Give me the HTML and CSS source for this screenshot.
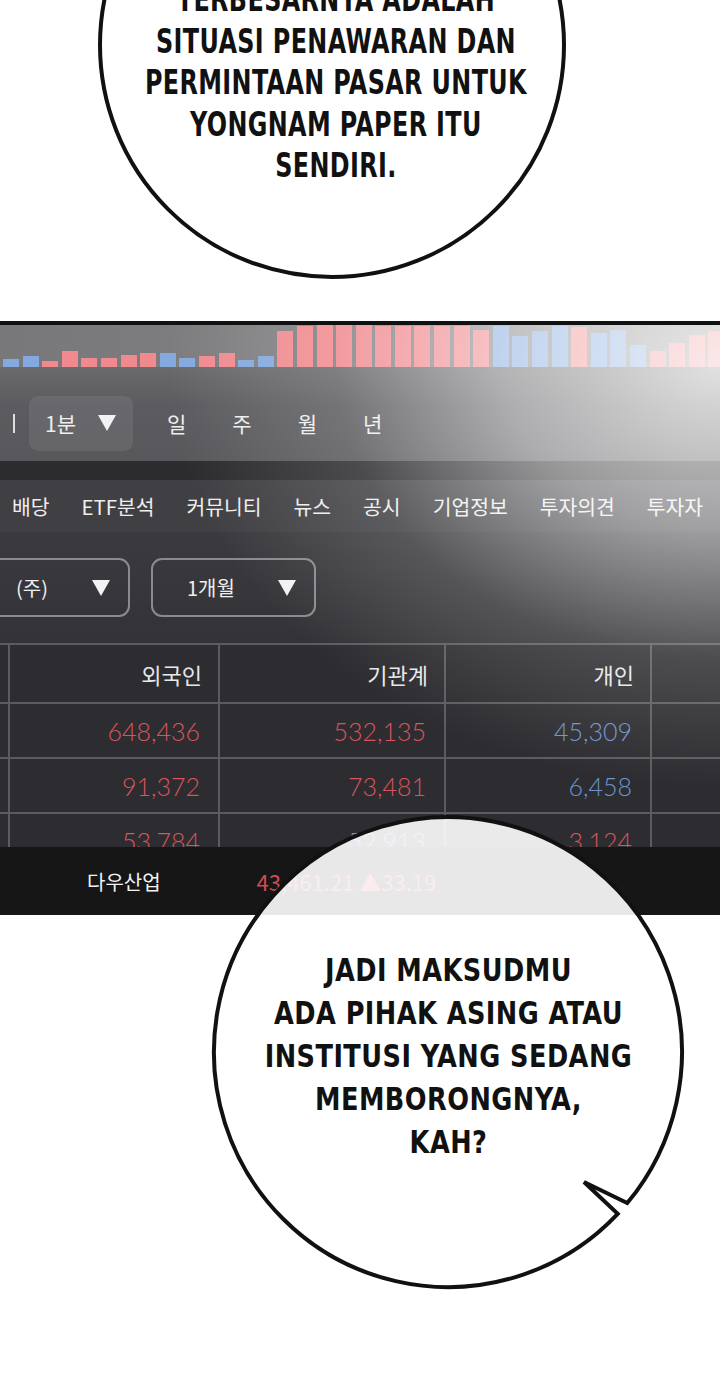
FILE: index.html
```html
<!DOCTYPE html>
<html lang="id">

<head>
    <meta charset="UTF-8">
    <link rel="stylesheet" href="styles.css">
    <title>Yongnam Paper</title>
</head>

<body>
    <div class="page">

        <div class="intro">
            <div class="bubble bubble-top">
                <p class="speech">
                    TERBESARNYA ADALAH<br>
                    SITUASI PENAWARAN DAN<br>
                    PERMINTAAN PASAR UNTUK<br>
                    YONGNAM PAPER ITU<br>
                    SENDIRI.
                </p>
            </div>
        </div>

        <section class="panel">
            <div class="volume-bars">
                <span class="bar down" style="height: 8px"></span>
                <span class="bar down" style="height: 11px"></span>
                <span class="bar up" style="height: 6px"></span>
                <span class="bar up" style="height: 16px"></span>
                <span class="bar up" style="height: 9px"></span>
                <span class="bar up" style="height: 9px"></span>
                <span class="bar up" style="height: 12px"></span>
                <span class="bar up" style="height: 14px"></span>
                <span class="bar down" style="height: 14px"></span>
                <span class="bar down" style="height: 9px"></span>
                <span class="bar up" style="height: 11px"></span>
                <span class="bar up" style="height: 14px"></span>
                <span class="bar down" style="height: 7px"></span>
                <span class="bar down" style="height: 11px"></span>
                <span class="bar up" style="height: 36px"></span>
                <span class="bar up" style="height: 41px"></span>
                <span class="bar up" style="height: 42px"></span>
                <span class="bar up" style="height: 42px"></span>
                <span class="bar up" style="height: 42px"></span>
                <span class="bar up" style="height: 41px"></span>
                <span class="bar up" style="height: 41px"></span>
                <span class="bar up" style="height: 41px"></span>
                <span class="bar up" style="height: 41px"></span>
                <span class="bar up" style="height: 41px"></span>
                <span class="bar up" style="height: 37px"></span>
                <span class="bar down" style="height: 41px"></span>
                <span class="bar down" style="height: 31px"></span>
                <span class="bar down" style="height: 36px"></span>
                <span class="bar down" style="height: 41px"></span>
                <span class="bar up" style="height: 40px"></span>
                <span class="bar down" style="height: 34px"></span>
                <span class="bar down" style="height: 37px"></span>
                <span class="bar down" style="height: 22px"></span>
                <span class="bar up" style="height: 16px"></span>
                <span class="bar up" style="height: 24px"></span>
                <span class="bar up" style="height: 32px"></span>
                <span class="bar up" style="height: 36px"></span>
            </div>

            <div class="period-row">
                <span class="divider"></span>
                <span class="period-select">1분
                    <svg class="caret" viewBox="0 0 18 16"><polygon points="0,0 18,0 9,16" /></svg>
                </span>
                <span class="period">일</span>
                <span class="period">주</span>
                <span class="period">월</span>
                <span class="period">년</span>
            </div>

            <div class="band"></div>

            <nav class="tabs">
                <span>배당</span>
                <span>ETF분석</span>
                <span>커뮤니티</span>
                <span>뉴스</span>
                <span>공시</span>
                <span>기업정보</span>
                <span>투자의견</span>
                <span>투자자</span>
            </nav>

            <div class="filters">
                <div class="select select-unit">(주)
                    <svg class="caret" viewBox="0 0 18 16"><polygon points="0,0 18,0 9,16" /></svg>
                </div>
                <div class="select select-range">1개월
                    <svg class="caret" viewBox="0 0 18 16"><polygon points="0,0 18,0 9,16" /></svg>
                </div>
            </div>

            <div class="table-wrap">
                <table class="investors">
                    <colgroup>
                        <col style="width: 9px">
                        <col style="width: 210px">
                        <col style="width: 226px">
                        <col style="width: 206px">
                        <col style="width: 69px">
                    </colgroup>
                    <tr class="head">
                        <td></td>
                        <td>외국인</td>
                        <td>기관계</td>
                        <td>개인</td>
                        <td></td>
                    </tr>
                    <tr>
                        <td></td>
                        <td class="up">648,436</td>
                        <td class="up">532,135</td>
                        <td class="down">45,309</td>
                        <td></td>
                    </tr>
                    <tr>
                        <td></td>
                        <td class="up">91,372</td>
                        <td class="up">73,481</td>
                        <td class="down">6,458</td>
                        <td></td>
                    </tr>
                    <tr>
                        <td></td>
                        <td class="up">53,784</td>
                        <td class="down">52,913</td>
                        <td class="up">3,124</td>
                        <td></td>
                    </tr>
                </table>
            </div>

            <div class="ticker">
                <span class="ticker-name">다우산업</span>
                <span class="ticker-value">43,461.21 ▲33.19</span>
            </div>
        </section>

        <div class="bubble-bottom">
            <svg class="bubble-shape" viewBox="0 0 490 490">
                <path d="M423.25 396.06 A234 235 0 1 0 413.74 406.77 L380 375 Z" />
            </svg>
            <p class="speech">
                JADI MAKSUDMU<br>
                ADA PIHAK ASING ATAU<br>
                INSTITUSI YANG SEDANG<br>
                MEMBORONGNYA,<br>
                KAH?
            </p>
        </div>

    </div>
</body>

</html>
```

FILE: styles.css
```css
body {
    margin: 0;
    background: #fff;
}

.page {
    position: relative;
    width: 720px;
    height: 1385px;
    overflow: hidden;
    background: #fff;
}

/* speech bubbles */
.speech {
    margin: 0;
    font-family: "DejaVu Sans Condensed", "DejaVu Sans", sans-serif;
    font-weight: 700;
    font-size: 32px;
    line-height: 42px;
    letter-spacing: 0.5px;
    text-align: center;
    white-space: nowrap;
    color: #111;
}

.intro {
    position: relative;
    height: 321px;
}

.bubble-top {
    position: absolute;
    left: 98px;
    top: -189px;
    width: 468px;
    height: 468px;
    box-sizing: border-box;
    border: 4px solid #111;
    border-radius: 50%;
    background: #fff;
    display: flex;
    align-items: center;
    justify-content: center;
}

.bubble-top .speech {
    font-size: 34px;
    line-height: 41.5px;
    transform: translate(4px, 38px) scaleX(0.78);
}

.bubble-bottom {
    position: absolute;
    left: 204px;
    top: 807px;
    width: 490px;
    height: 490px;
    display: flex;
    align-items: center;
    justify-content: center;
}

.bubble-shape {
    position: absolute;
    left: 0;
    top: 0;
    width: 490px;
    height: 490px;
    overflow: visible;
}

.bubble-shape path {
    fill: rgba(255, 255, 255, 0.9);
    stroke: #111;
    stroke-width: 4;
    stroke-linejoin: miter;
}

.bubble-bottom .speech {
    position: relative;
    line-height: 43px;
    transform: translate(-1px, 4px) scaleX(0.89);
}

/* stock panel */
.panel {
    position: relative;
    height: 590px;
    border-top: 4px solid #111;
    background: #2d2d31;
    overflow: hidden;
    font-family: "Noto Sans CJK KR", "Noto Sans", sans-serif;
    color: #eee;
}

/* light glare over the screen, top right */
.panel::after {
    content: "";
    position: absolute;
    left: 0;
    right: 0;
    top: 0;
    bottom: 68px;
    pointer-events: none;
    background: radial-gradient(ellipse 600px 460px at 720px 40px,
            rgba(255, 255, 255, 0.8) 0%,
            rgba(255, 255, 255, 0.5) 36%,
            rgba(255, 255, 255, 0.15) 64%,
            rgba(255, 255, 255, 0) 92%);
}

.volume-bars {
    display: flex;
    align-items: flex-end;
    gap: 3.6px;
    height: 42px;
    padding-left: 3px;
    background: linear-gradient(90deg, #78787b, #8a8a8c);
}

.bar {
    flex: none;
    width: 16px;
}

.bar.up {
    background: #f08a8f;
}

.bar.down {
    background: #84a9de;
}

.period-row {
    display: flex;
    align-items: center;
    height: 76px;
    padding-top: 18px;
    background: linear-gradient(180deg, #6a6a6d 0%, #5c5c60 40%, #58585c 100%);
    font-size: 21px;
}

.divider {
    width: 2px;
    height: 19px;
    margin-left: 13px;
    background: #ddd;
}

.period-select {
    display: flex;
    align-items: center;
    gap: 22px;
    width: 104px;
    height: 55px;
    margin-left: 14px;
    padding-left: 16px;
    box-sizing: border-box;
    border-radius: 9px;
    background: rgba(255, 255, 255, 0.08);
}

.period {
    margin-left: 46px;
}

.period-select+.period {
    margin-left: 34px;
}

.caret {
    width: 18px;
    height: 16px;
    fill: #f2f2f2;
}

.band {
    height: 19px;
    background: #2c2c2f;
}

.tabs {
    display: flex;
    align-items: center;
    gap: 32px;
    height: 52px;
    padding-left: 12px;
    background: #404044;
    font-size: 20.4px;
    white-space: nowrap;
}

.filters {
    display: flex;
    gap: 21px;
    height: 111px;
    padding-top: 26px;
    box-sizing: border-box;
    background: linear-gradient(180deg, #3b3b3f, #333337);
}

.select {
    display: flex;
    align-items: center;
    justify-content: space-between;
    height: 59px;
    padding: 0 18px 0 34px;
    box-sizing: border-box;
    border: 2px solid #8b8b8f;
    border-radius: 11px;
    font-size: 20px;
}

.select-unit {
    width: 150px;
    margin-left: -20px;
}

.select-range {
    width: 165px;
}

.table-wrap {
    height: 204px;
    overflow: hidden;
    background: #2d2d31;
}

.investors {
    width: 720px;
    table-layout: fixed;
    border-collapse: collapse;
}

.investors td {
    height: 53px;
    padding: 0 18px 0 0;
    border: 2px solid #5c5c60;
    text-align: right;
    font-family: Lato, "Noto Sans", sans-serif;
    font-size: 25px;
    font-weight: 300;
}

.investors td:first-child {
    border-left: none;
}

.investors td:last-child {
    border-right: none;
}

.investors .head td {
    height: 57px;
    font-family: "Noto Sans CJK KR", "Noto Sans", sans-serif;
    font-size: 22px;
    font-weight: 400;
    color: #e8e8e8;
    padding-right: 16px;
}

.investors .up {
    color: #d9545c;
}

.investors .down {
    color: #6e94cf;
}

.ticker {
    display: flex;
    align-items: center;
    height: 68px;
    padding-left: 87px;
    background: #161616;
    font-size: 20px;
}

.ticker-name {
    color: #f2f2f2;
}

.ticker-value {
    margin-left: 96px;
    font-size: 22px;
    color: #d24a52;
}
```
